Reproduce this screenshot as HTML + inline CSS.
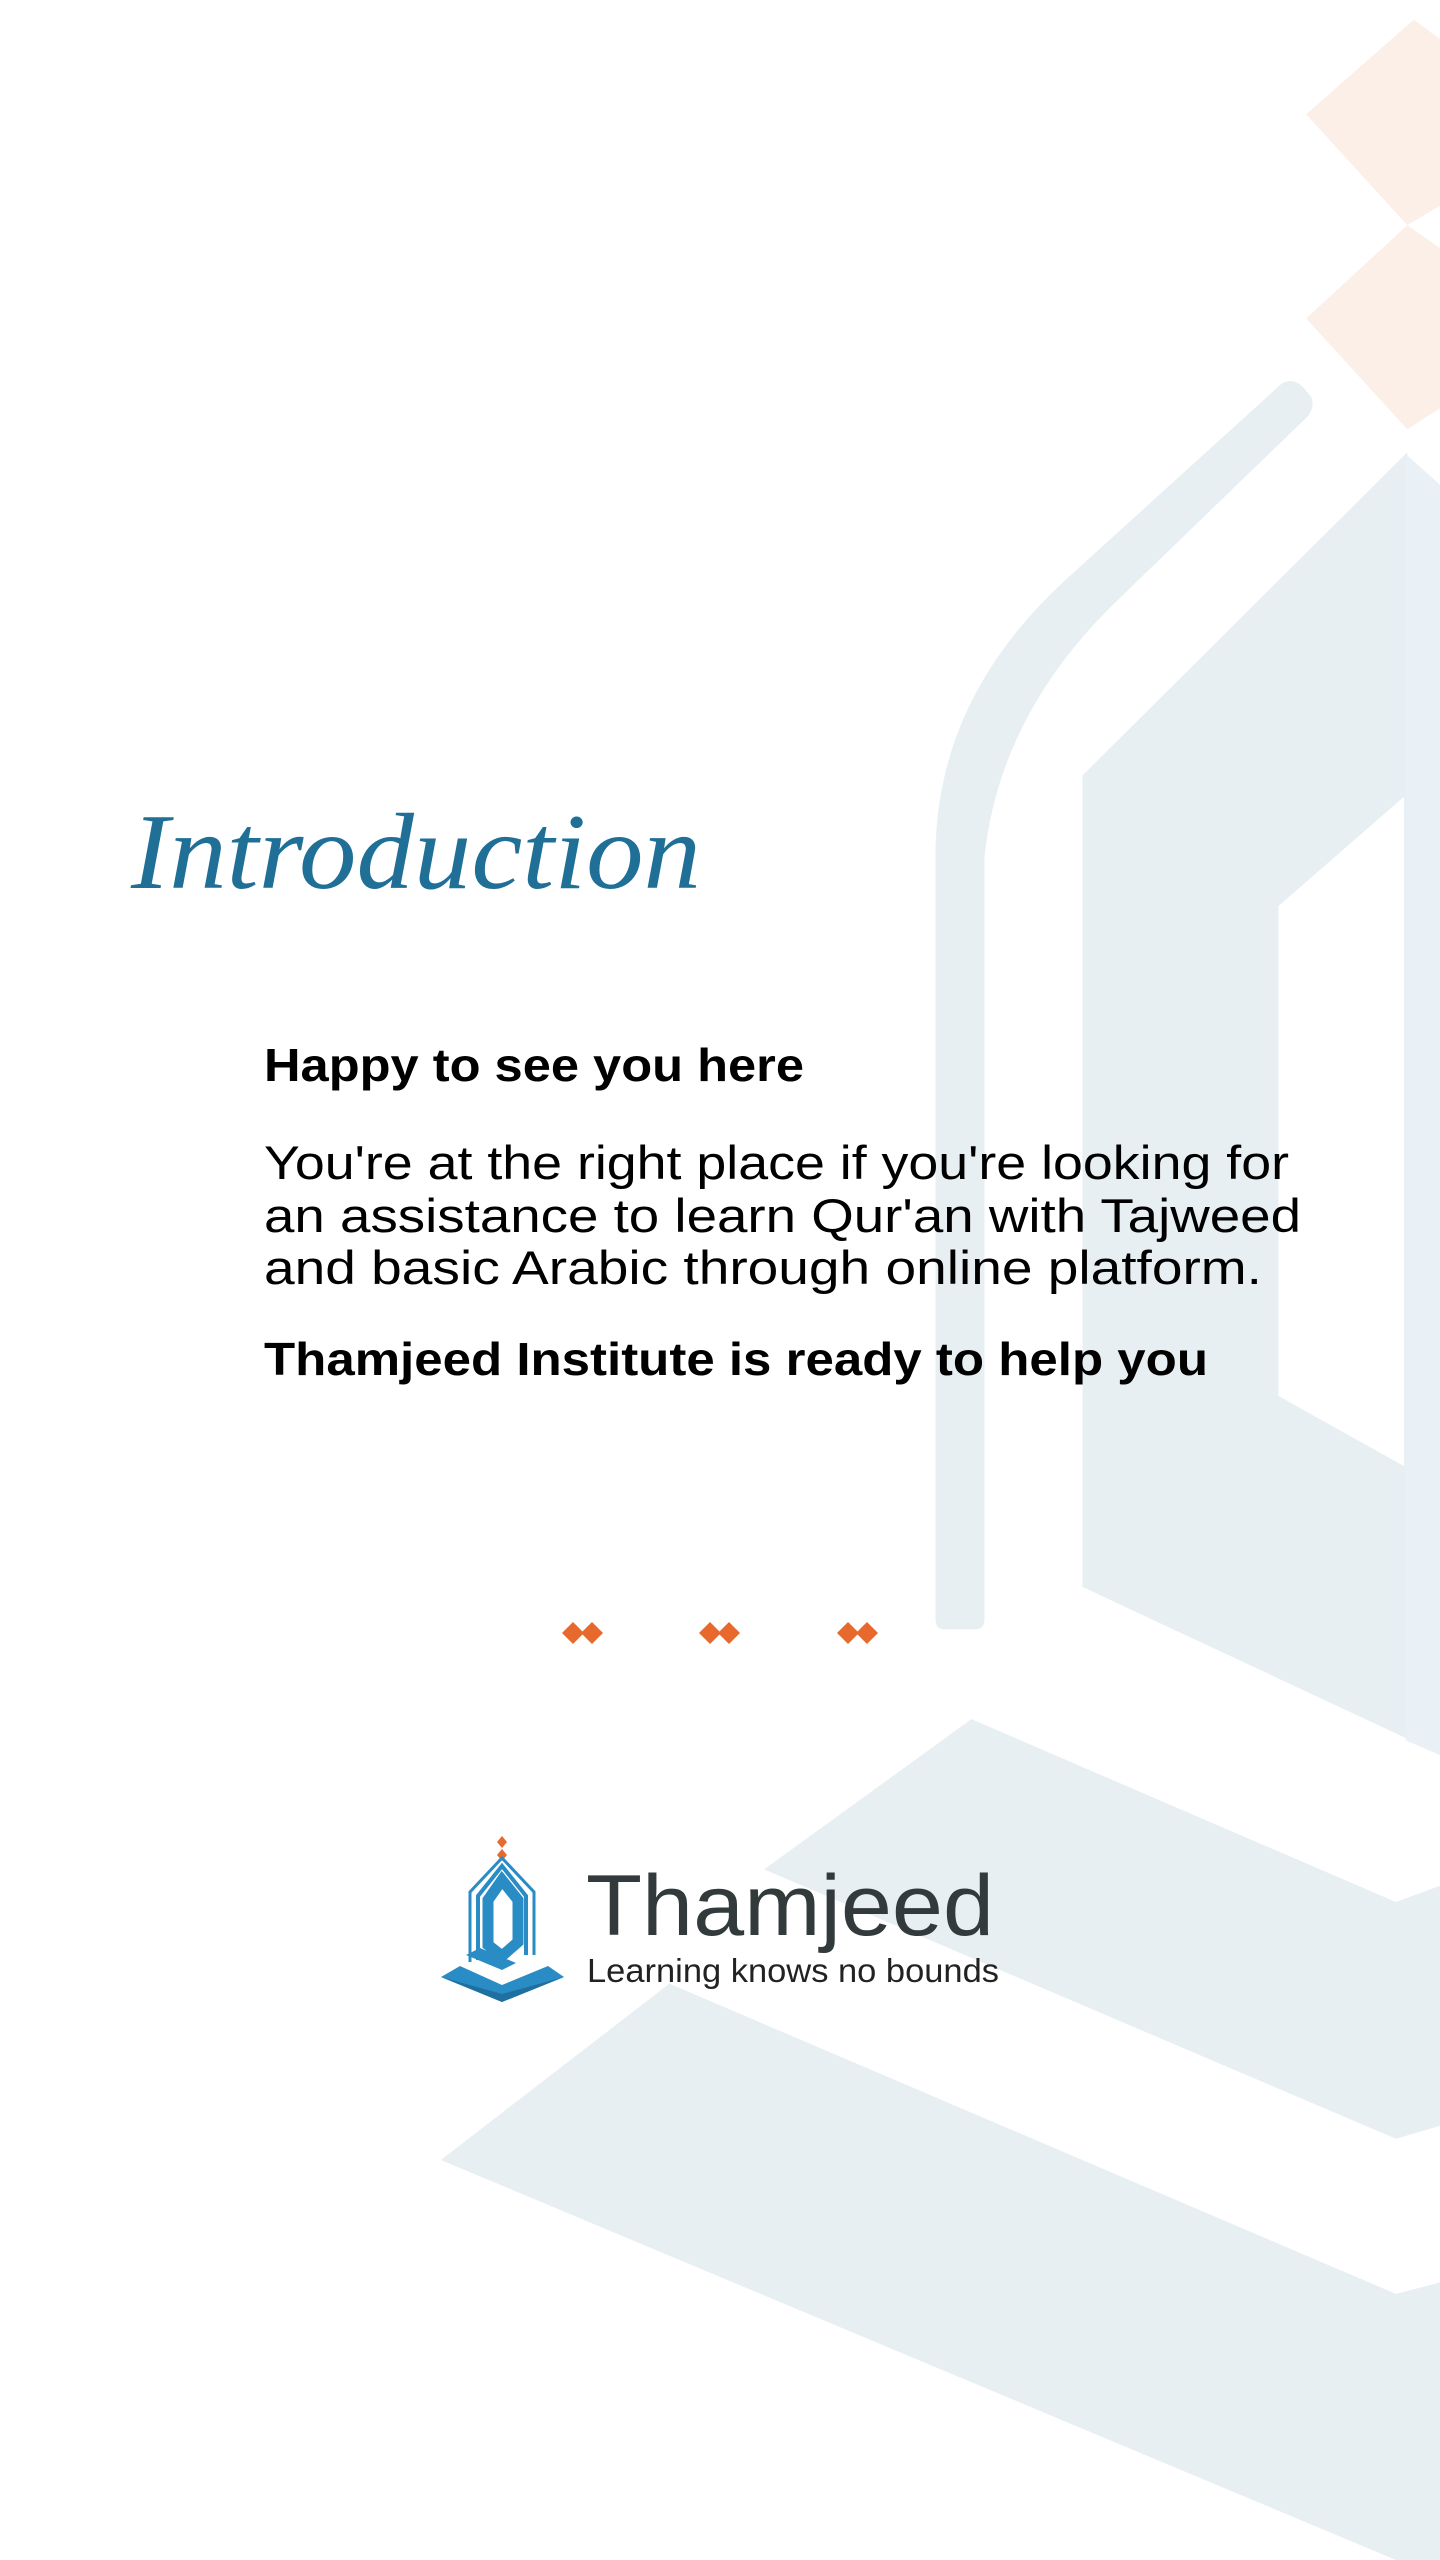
<!DOCTYPE html>
<html><head><meta charset="utf-8"><style>
html,body{margin:0;padding:0;background:#fff;}
svg{display:block;}
</style></head><body>
<svg width="1440" height="2560" viewBox="0 0 1440 2560" xmlns="http://www.w3.org/2000/svg">
<rect width="1440" height="2560" fill="#fff"/>
<g transform="scale(1.63265)">
  <!-- orange diamonds -->
  <polygon points="800,70 866,12 882,24 882,126 862,138" fill="#fbefe8"/>
  <polygon points="800,195 862,138 882,152 882,250 862,263" fill="#fbefe8"/>
  <!-- curved band -->
  <path d="M785,235 Q792,231 798,237 L803,243 Q806,250 800,256 L680,372 Q612,440 603,525 L603,992 Q603,998 597,998 L579,998 Q573,998 573,992 L573,520 Q575,425 655,353 Z" fill="#e7eff3"/>
  <!-- hexagon -->
  <path d="M663,475 L862,277 L862,1065 L663,972 Z M783,555 L783,855 L860,898 L860,488 Z" fill="#e7eff3" fill-rule="evenodd"/>
  <polygon points="861,278 882,297 882,1075 861,1066" fill="#e9f1f6"/>
  <!-- stripes -->
  <polygon points="468,1145 595,1053 855,1165 882,1155 882,1302 855,1310" fill="#e7eff3"/>
  <polygon points="270,1323 410,1215 855,1405 882,1398 882,1568 855,1568" fill="#e7eff3"/>
</g>

<!-- Title -->
<text x="131" y="888" font-family="'Liberation Serif',serif" font-style="italic" font-size="108" fill="#1f6f96" textLength="570" lengthAdjust="spacingAndGlyphs">Introduction</text>

<!-- Body -->
<g font-family="'Liberation Sans',sans-serif" fill="#000">
  <text x="264" y="1081" font-weight="bold" font-size="46" textLength="540" lengthAdjust="spacingAndGlyphs">Happy to see you here</text>
  <text x="264" y="1179" font-size="47" textLength="1025" lengthAdjust="spacingAndGlyphs">You're at the right place if you're looking for</text>
  <text x="264" y="1232" font-size="47" textLength="1037" lengthAdjust="spacingAndGlyphs">an assistance  to learn Qur'an with Tajweed</text>
  <text x="264" y="1284" font-size="47" textLength="998" lengthAdjust="spacingAndGlyphs">and basic Arabic through online platform.</text>
  <text x="264" y="1375" font-weight="bold" font-size="46" textLength="944" lengthAdjust="spacingAndGlyphs">Thamjeed Institute is ready to help you</text>
</g>

<!-- small orange diamonds -->
<g fill="#e8692e">
  <polygon points="573,1622 584,1633 573,1644 562,1633"/><polygon points="592,1622 603,1633 592,1644 581,1633"/>
  <polygon points="710,1622 721,1633 710,1644 699,1633"/><polygon points="729,1622 740,1633 729,1644 718,1633"/>
  <polygon points="848,1622 859,1633 848,1644 837,1633"/><polygon points="867,1622 878,1633 867,1644 856,1633"/>
</g>

<!-- logo icon -->
<g>
  <polygon points="502,1836 507,1842 502,1848 497,1842" fill="#e8692e"/>
  <polygon points="502,1849 507,1855 502,1861 497,1855" fill="#e8692e"/>
  <path d="M478,1960 L478,1896 L502,1866 L526,1896 L526,1955" fill="none" stroke="#2a8cc4" stroke-width="4"/>
  <path d="M470,1962 L470,1892 L502,1858 L534,1892 L534,1955" fill="none" stroke="#2a8cc4" stroke-width="3"/>
  <path d="M488,1900 L502,1880 L518,1900 L518,1942 L502,1956 L488,1945 Z" fill="none" stroke="#2a8cc4" stroke-width="11"/>
  <polygon points="466,1955 480,1948 516,1963 502,1970" fill="#2a8cc4"/>
  <polygon points="441,1977 460,1966 502,1985 548,1966 564,1977 502,2002" fill="#2a8cc4"/>
  <polygon points="441,1977 502,2002 502,1994" fill="#1f6fa0"/>
  <polygon points="564,1977 502,2002 502,1994" fill="#1f6fa0"/>
</g>
<text x="586" y="1935" font-family="'Liberation Sans',sans-serif" font-size="86" fill="#333a3c" textLength="408" lengthAdjust="spacingAndGlyphs">Thamjeed</text>
<text x="587" y="1982" font-family="'Liberation Sans',sans-serif" font-size="33" fill="#222" textLength="412" lengthAdjust="spacingAndGlyphs">Learning knows no bounds</text>
</svg>
</body></html>
